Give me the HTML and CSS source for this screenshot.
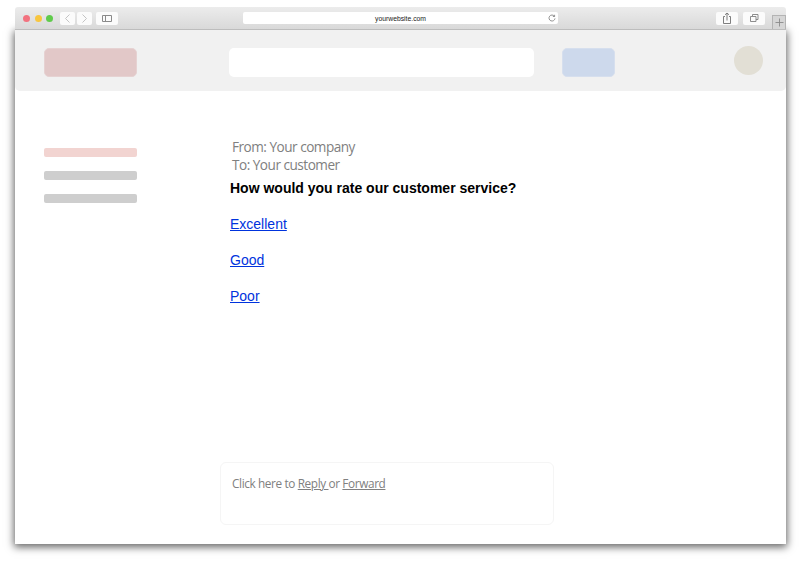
FILE: index.html
```html
<!DOCTYPE html>
<html lang="en">
<head>
<meta charset="utf-8">
<title>Your website</title>
<link rel="stylesheet" href="styles.css">
</head>
<body>
<div class="window">
  <div class="toolbar">
    <div class="lights"><span class="light red"></span><span class="light yellow"></span><span class="light green"></span></div>
    <div class="nav">
      <span class="tbtn nav-btn"><svg width="15" height="13" viewBox="0 0 15 13"><path d="M9.500 2.500 5.500 6.500l4 4" fill="none" stroke="#c4c4c4" stroke-width="1"/></svg></span>
      <span class="tbtn nav-btn"><svg width="15" height="13" viewBox="0 0 15 13"><path d="M5.500 2.500l4 4-4 4" fill="none" stroke="#c4c4c4" stroke-width="1"/></svg></span>
    </div>
    <span class="tbtn side-btn"><svg width="22" height="13" viewBox="0 0 22 13"><path d="M6.500 3.500h9v6h-9zM9.500 3.500v6" fill="none" stroke="#8a8a8a" stroke-width="1"/></svg></span>
    <div class="address">
      <span class="url">yourwebsite.com</span>
      <svg class="reload" width="8" height="8" viewBox="0 0 8 8"><path d="M6.400 2.200A3 3 0 1 0 7 4.400M6.600.8v1.700H4.900" fill="none" stroke="#777" stroke-width=".8"/></svg>
    </div>
    <span class="tbtn act-btn"><svg width="22" height="13" viewBox="0 0 22 13"><path d="M9 4.500H7.500v7h7v-7H13M11 8.500V1M9 2.800 11 1l2 1.800" fill="none" stroke="#707070" stroke-width=".9"/></svg></span>
    <span class="tbtn act-btn"><svg width="22" height="13" viewBox="0 0 22 13"><path d="M9.500 4V2.500h5.500v5H13M7.500 4.500h5.500v5H7.500z" fill="none" stroke="#808080" stroke-width=".9"/></svg></span>
    <span class="plus"><svg width="13" height="13" viewBox="0 0 13 13"><path d="M6.500 2.500v8M2.500 6.500h8" fill="none" stroke="#8a8a8a" stroke-width=".9"/></svg></span>
  </div>
  <div class="page">
    <header class="site-header">
      <div class="logo"></div>
      <div class="search"></div>
      <div class="cta"></div>
      <div class="avatar"></div>
    </header>
    <div class="content">
      <aside class="sidebar">
        <div class="bar bar-pink"></div>
        <div class="bar"></div>
        <div class="bar"></div>
      </aside>
      <main class="mail">
        <div class="meta">
          <div>From: Your company</div>
          <div>To: Your customer</div>
        </div>
        <p class="question">How would you rate our customer service?</p>
        <p class="option"><a href="#">Excellent</a></p>
        <p class="option"><a href="#">Good</a></p>
        <p class="option"><a href="#">Poor</a></p>
        <div class="reply">Click here to <span class="u">Reply </span>or <span class="u">Forward</span></div>
      </main>
    </div>
  </div>
</div>
</body>
</html>
```
FILE: styles.css
```css
* { box-sizing: border-box; }
html, body { margin: 0; height: 100%; background: #fff; overflow: hidden; }
body { padding: 7px 17px 0 15px; font-family: "Liberation Sans", Arial, sans-serif; }
.window { width: 771px; height: 537px; display: flex; flex-direction: column; }

.toolbar {
  position: relative; z-index: 2; height: 23px; flex: none;
  display: flex; align-items: flex-start; padding: 5px 0 0 8px;
  background: linear-gradient(#ececec, #d9d9d9);
  border-bottom: 1px solid #bdbdbd;
  border-radius: 3px 3px 0 0;
}
.lights { display: flex; gap: 4.600px; margin-top: 3px; width: 37px; }
.light { width: 7px; height: 7px; border-radius: 50%; }
.red { background: #f2727f; }
.yellow { background: #f8c63f; }
.green { background: #5fcb4b; }
.tbtn { display: block; height: 13px; background: #fbfbfb; border-radius: 2px; }
.tbtn svg { display: block; }
.nav { display: flex; gap: 2px; }
.nav-btn { width: 15px; }
.side-btn { width: 22px; margin-left: 4px; }
.address {
  width: 315px; height: 12px; margin: 0 158px 0 125px; background: #fff; border-radius: 2px;
  display: flex; align-items: center; justify-content: center; position: relative;
}
.url { font-size: 6.800px; color: #222; }
.reload { position: absolute; right: 2px; top: 2px; }
.act-btn { width: 22px; margin-right: 5px; }
.act-btn + .act-btn { margin-right: 7px; }
.plus {
  width: 14px; height: 14px; margin-top: 3px; background: #d6d6d6;
  border: 1px solid #b4b4b4; border-bottom: 0; display: block;
}
.plus svg { display: block; }

.page {
  flex: 1; background: #fff; display: flex; flex-direction: column;
  box-shadow: 0 2px 8px 1px rgba(0,0,0,.62);
}
.site-header {
  height: 61px; flex: none; background: #f1f1f1; border-radius: 0 0 5px 5px;
  display: flex; align-items: flex-start; padding: 18px 0 0 29px;
}
.logo { width: 93px; height: 29px; background: #e2c8c8; border: 1px solid #e6d2d2; border-radius: 5px; }
.search { width: 305px; height: 29px; margin-left: 92px; background: #fff; border-radius: 5px; }
.cta { width: 53px; height: 29px; margin-left: 28px; background: #cdd9ec; border: 1px solid #d6dfee; border-radius: 5px; }
.avatar { width: 29px; height: 29px; margin: -2px 0 0 119px; background: #e2dfd5; border-radius: 50%; }

.content { flex: 1; display: flex; padding-left: 29px; }
.sidebar { width: 186px; flex: none; padding-top: 57px; display: flex; flex-direction: column; gap: 14px; }
.bar { width: 93px; height: 9px; background: #cecece; border-radius: 2px; }
.bar-pink { background: #f2d4d1; }

.mail { flex: 1; display: flex; flex-direction: column; position: relative; padding-top: 47px; }
.meta { font-family: "Open Sans", sans-serif; font-size: 13.600px; line-height: 18px; color: #808080; padding-left: 2px; letter-spacing: -.5px; }
.question { margin: 5px 0 0; font-size: 14px; line-height: 18px; font-weight: 700; color: #000; }
.option { margin: 18px 0 0; font-size: 14px; line-height: 18px; }
.option a { color: #0033dd; }
.reply {
  width: 334px; height: 63px; margin: 157px 0 0 -10px; padding: 12px 0 0 11px;
  border: 1px solid #f5f5f5; border-radius: 6px;
  font-family: "Open Sans", sans-serif; font-size: 11.800px; line-height: 16px; color: #808080; letter-spacing: -.38px;
}
.u { text-decoration: underline; }
```
